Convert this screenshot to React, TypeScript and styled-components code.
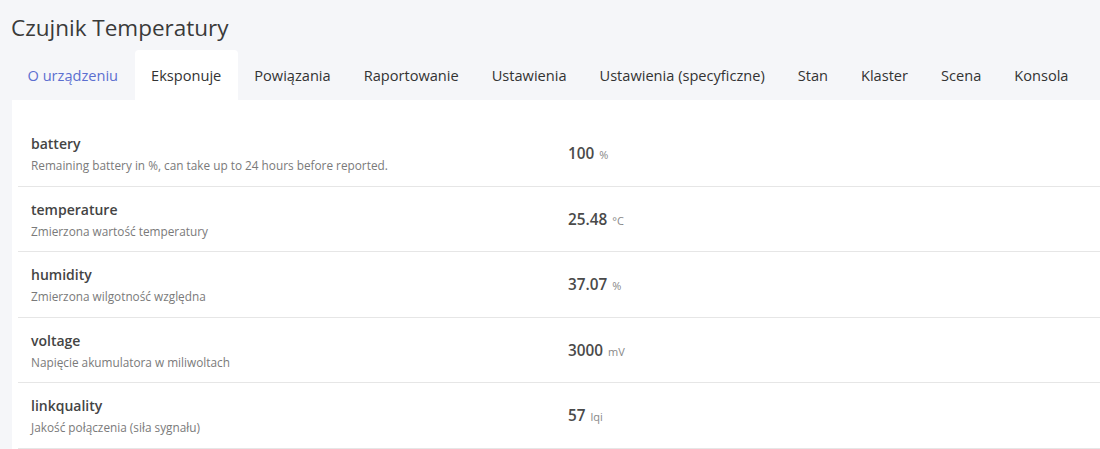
import React from 'react';
import styled, { createGlobalStyle } from 'styled-components';

const GlobalStyle = createGlobalStyle`
  html, body {
    margin: 0;
    padding: 0;
    background: #f5f6f9;
    font-family: "Open Sans", "Noto Sans", sans-serif;
    color: #333;
    overflow: hidden;
  }
`;

const Page = styled.div`
  padding: 0 0 0 11px;
  height: 449px;
  box-sizing: border-box;
`;

const Title = styled.h1`
  margin: 0;
  height: 50px;
  line-height: 55px;
  font-size: 22.5px;
  font-weight: 400;
  color: #3a3a3a;
`;

const Tabs = styled.nav`
  display: flex;
  height: 50px;
`;

const Tab = styled.div<{ $active?: boolean; $hover?: boolean }>`
  display: flex;
  align-items: center;
  padding: 0 16.5px;
  font-size: 14.6px;
  color: ${(p) => (p.$hover ? '#5c6fd0' : '#333')};
  background: ${(p) => (p.$active ? '#fff' : 'transparent')};
  border-radius: 4px 4px 0 0;
  white-space: nowrap;
`;

const Card = styled.div`
  background: #fff;
  margin-left: 1px;
  margin-right: -20px;
  padding: 21px 6px 0;
`;

const Row = styled.div`
  display: grid;
  grid-template-columns: 537px 1fr;
  align-items: center;
  padding: 13px 13px 9.5px;
  border-bottom: 1px solid #e6e6e6;
`;

const Name = styled.div`
  font-size: 14px;
  font-weight: 600;
  line-height: 20px;
  color: #444;
`;

const Desc = styled.div`
  font-size: 11.8px;
  line-height: 22px;
  color: #7a7a7a;
`;

const Value = styled.div`
  font-size: 15.3px;
  font-weight: 600;
  color: #4a4a4a;
  padding-bottom: 4px;
`;

const Unit = styled.span`
  font-size: 11px;
  font-weight: 400;
  color: #888;
  margin-left: 5px;
`;

const tabs = [
  'O urządzeniu',
  'Eksponuje',
  'Powiązania',
  'Raportowanie',
  'Ustawienia',
  'Ustawienia (specyficzne)',
  'Stan',
  'Klaster',
  'Scena',
  'Konsola',
];

const rows = [
  { name: 'battery', desc: 'Remaining battery in %, can take up to 24 hours before reported.', value: '100', unit: '%' },
  { name: 'temperature', desc: 'Zmierzona wartość temperatury', value: '25.48', unit: '°C' },
  { name: 'humidity', desc: 'Zmierzona wilgotność względna', value: '37.07', unit: '%' },
  { name: 'voltage', desc: 'Napięcie akumulatora w miliwoltach', value: '3000', unit: 'mV' },
  { name: 'linkquality', desc: 'Jakość połączenia (siła sygnału)', value: '57', unit: 'lqi' },
];

const App: React.FC = () => {
  return (
    <>
      <GlobalStyle />
      <Page>
        <Title>Czujnik Temperatury</Title>
        <Tabs>
          {tabs.map((t, i) => (
            <Tab key={t} $hover={i === 0} $active={i === 1}>
              {t}
            </Tab>
          ))}
        </Tabs>
        <Card>
          {rows.map((r) => (
            <Row key={r.name}>
              <div>
                <Name>{r.name}</Name>
                <Desc>{r.desc}</Desc>
              </div>
              <Value>
                {r.value}
                <Unit>{r.unit}</Unit>
              </Value>
            </Row>
          ))}
        </Card>
      </Page>
    </>
  );
};

export default App;
